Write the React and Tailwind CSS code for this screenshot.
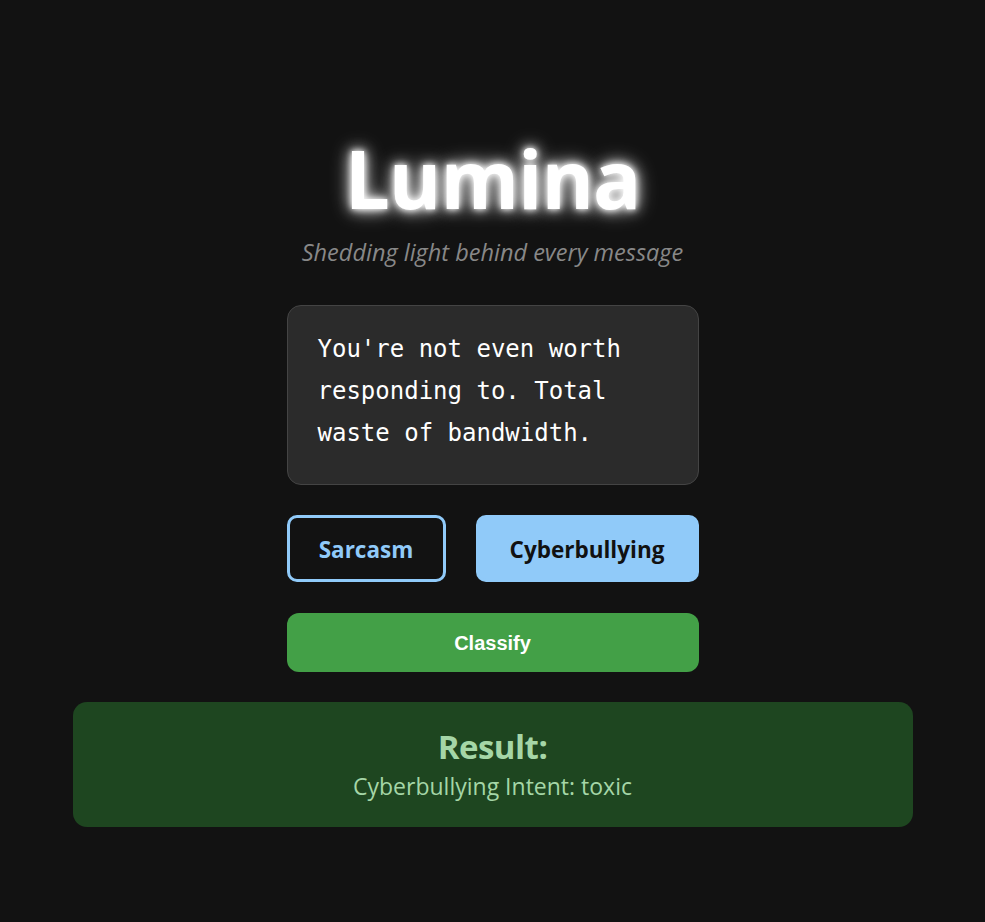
import React, { useState } from 'react';

export default function App() {
  const [text, setText] = useState(
    "You're not even worth responding to. Total waste of bandwidth."
  );
  const [mode, setMode] = useState('cyberbullying');

  return (
    <div className="min-h-screen w-full bg-[#121212] flex flex-col items-center pt-[128px] font-['Open_Sans',sans-serif]">
      <h1 className="text-[80px] leading-[100px] font-bold text-white tracking-[-1px] [text-shadow:0_0_6px_#fff,0_0_14px_#fff,0_0_22px_rgba(255,255,255,0.6)]">
        Lumina
      </h1>
      <p className="mt-[8px] text-[23.5px] leading-[32px] italic text-[#888888]">
        Shedding light behind every message
      </p>

      <div className="mt-[37px] w-[412px] flex flex-col">
        <textarea
          value={text}
          onChange={e => setText(e.target.value)}
          className="h-[180px] w-full resize-none rounded-[14px] border border-[#444] bg-[#2b2b2b] px-[30px] pt-[22px] text-[24px] leading-[42px] text-white outline-none font-['DejaVu_Sans_Mono',monospace]"
        />

        <div className="mt-[30px] flex gap-[30px]">
          <button
            onClick={() => setMode('sarcasm')}
            className={
              mode === 'sarcasm'
                ? 'h-[67px] w-[159px] rounded-[10px] border-[3px] border-[#90caf9] bg-[#90caf9] pt-[3px] text-[22.5px] font-bold text-[#111]'
                : 'h-[67px] w-[159px] rounded-[10px] border-[3px] border-[#90caf9] bg-transparent pt-[3px] text-[22.5px] font-bold text-[#90caf9]'
            }
          >
            Sarcasm
          </button>
          <button
            onClick={() => setMode('cyberbullying')}
            className={
              mode === 'cyberbullying'
                ? 'h-[67px] flex-1 rounded-[10px] border-[3px] border-[#90caf9] bg-[#90caf9] pt-[3px] text-[22.5px] font-bold text-[#111]'
                : 'h-[67px] flex-1 rounded-[10px] border-[3px] border-[#90caf9] bg-transparent pt-[3px] text-[22.5px] font-bold text-[#90caf9]'
            }
          >
            Cyberbullying
          </button>
        </div>

        <button className="mt-[31px] h-[59px] w-full rounded-[12px] bg-[#43a047] text-[20px] font-bold text-white font-['Liberation_Sans',sans-serif]">
          Classify
        </button>
      </div>

      <div className="mt-[30px] w-[840px] h-[125px] rounded-[14px] bg-[#1e4620] flex flex-col items-center justify-center text-[#a5d6a7]">
        <h2 className="text-[33px] leading-[40px] font-bold tracking-[-0.5px]">Result:</h2>
        <p className="mt-[2px] text-[23px] leading-[34px]">Cyberbullying Intent: toxic</p>
      </div>
    </div>
  );
}
